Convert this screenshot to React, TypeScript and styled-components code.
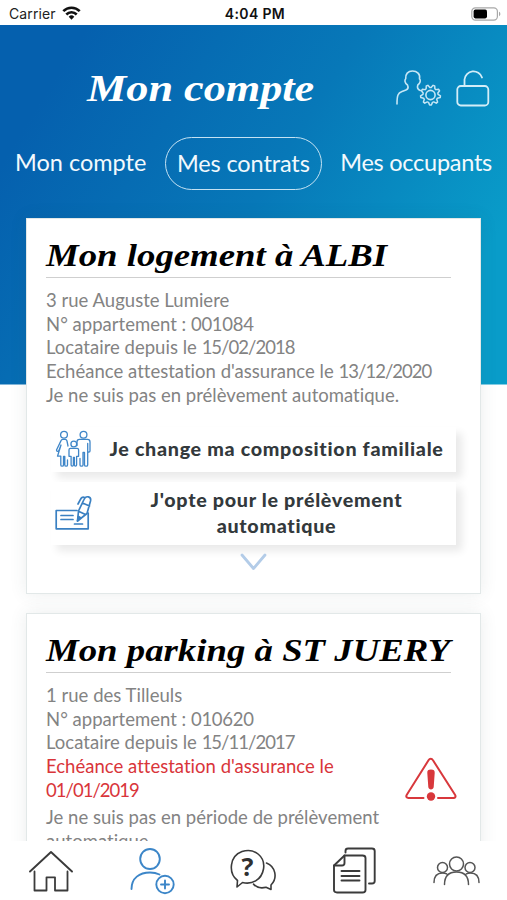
import React from "react";
import styled, { createGlobalStyle } from "styled-components";

const GlobalStyle = createGlobalStyle`
  * { box-sizing: border-box; }
  body { margin: 0; background: #fff; }
  svg { display: block; fill: none; stroke-linecap: round; stroke-linejoin: round; flex: none; }
`;

const Screen = styled.div`
  width: 507px;
  height: 900px;
  display: flex;
  flex-direction: column;
  overflow: hidden;
  background: #fff;
  font-family: Lato, sans-serif;
  font-variant-ligatures: none;
`;

const StatusBar = styled.div`
  height: 25px;
  flex: none;
  display: grid;
  grid-template-columns: 1fr auto 1fr;
  align-items: center;
  padding: 2px 6px 0 9px;
  font-family: Inter, sans-serif;
  font-size: 14px;
  color: #222;
`;
const Carrier = styled.div`
  display: flex;
  align-items: center;
  gap: 6px;
  letter-spacing: 0.1px;
`;
const Clock = styled.div`
  font-weight: 600;
  letter-spacing: 0.35px;
  color: #111;
`;
const Battery = styled.div`
  justify-self: end;
`;

const Main = styled.main`
  flex: 1;
  min-height: 0;
  overflow: hidden;
  background: linear-gradient(122deg, #0560ae 12%, #0778b8 50%, #099cc9 86%) no-repeat;
  background-size: 100% 359.5px;
`;

const Header = styled.header`
  height: 103px;
  display: flex;
  align-items: center;
  padding: 24px 18px 0 87px;
`;
const Title = styled.h1`
  margin: 0;
  width: 309px;
  flex: none;
  font: italic 700 37px/44px "Liberation Serif", serif;
  color: #fff;
  white-space: nowrap;
  transform: scaleX(1.195);
  transform-origin: left;
`;
const HeaderIcons = styled.div`
  display: flex;
  align-items: center;
  gap: 14px;
`;

const Tabs = styled.nav`
  display: flex;
  align-items: center;
  height: 70px;
  padding: 0 15px;
  justify-content: space-between;
`;
const Tab = styled.a<{ $active?: boolean }>`
  display: flex;
  align-items: center;
  justify-content: center;
  height: 53px;
  width: ${(p) => (p.$active ? "157px" : "auto")};
  border: ${(p) => (p.$active ? "1.5px solid #c4e2f3" : "0")};
  border-radius: 27px;
  padding-bottom: ${(p) => (p.$active ? "0" : "2px")};
  font-size: 23.5px;
  letter-spacing: -0.12px;
  color: #f2f9fd;
  white-space: nowrap;

  &:first-child {
    letter-spacing: 0;
  }
  &:last-child {
    letter-spacing: -0.26px;
  }
`;

const Cards = styled.div`
  display: flex;
  flex-direction: column;
  gap: 19px;
  padding: 20px 26px 0;
`;
const Card = styled.section<{ $height: number }>`
  height: ${(p) => p.$height}px;
  flex: none;
  display: flex;
  flex-direction: column;
  padding: 16px 24px 0 19px;
  background: #fff;
  border: 1px solid #e2e8e8;
  box-shadow: 0 0 16px rgba(60, 80, 80, 0.1);
`;
const CardTitle = styled.h2`
  margin: 0 5px 0 0;
  height: 43px;
  flex: none;
  border-bottom: 1.5px solid #cfcfcf;
`;
const CardTitleText = styled.span`
  display: inline-block;
  font: italic 700 32.5px/41px "Liberation Serif", serif;
  color: #000;
  white-space: nowrap;
  transform: scaleX(1.132);
  transform-origin: left;
`;

const Details = styled.div`
  padding-top: 11px;
`;
const Line = styled.div<{ $alert?: boolean }>`
  font-size: 18.5px;
  line-height: 23.7px;
  letter-spacing: 0.02px;
  white-space: nowrap;
  color: ${(p) => (p.$alert ? "#d9353a" : "#838383")};
`;
const Digits = styled.span<{ $code?: boolean }>`
  letter-spacing: ${(p) => (p.$code ? "-0.3px" : "-0.98px")};
`;
const AlertRow = styled.div`
  display: flex;
  justify-content: space-between;
  align-items: center;
  margin: 0 -1px 3.5px 0;
`;

const Actions = styled.div`
  display: flex;
  flex-direction: column;
  gap: 10px;
  padding-top: 19px;
`;
const Action = styled.button<{ $height: number }>`
  display: flex;
  align-items: center;
  height: ${(p) => p.$height}px;
  margin-left: 5px;
  padding: 0 0 0 4px;
  border: 0;
  background: #fff;
  box-shadow: 6px 6px 8px rgba(0, 0, 0, 0.085);
`;
const ActionLabel = styled.span`
  flex: 1;
  text-align: center;
  padding-left: 5px;
  font: 900 19.7px/26px Lato, sans-serif;
  letter-spacing: 0.7px;
  color: #33393c;
  margin-top: -1px;
`;
const More = styled.div`
  display: flex;
  justify-content: center;
  padding: 8px 0 0 5px;
`;

const BottomNav = styled.nav`
  height: 59px;
  flex: none;
  display: grid;
  grid-template-columns: repeat(5, 1fr);
  justify-items: center;
  align-items: center;
  background: #fff;
`;

const WifiIcon = () => (
  <svg width="19" height="15" viewBox="0 0 19 15" stroke="#111" strokeWidth="2.6">
    <path d="M1.3 5.2a11.500 11.500 0 0 1 16.400 0M4.300 8.500a7.300 7.300 0 0 1 10.400 0" strokeLinecap="butt" />
    <path d="M6.700 10.700a4 4 0 0 1 5.600 0L9.500 13.800z" fill="#111" stroke="none" />
  </svg>
);

const BatteryIcon = () => (
  <svg width="30" height="14" viewBox="0 0 30 14">
    <rect x="0.8" y="0.8" width="25.6" height="12.4" rx="3.6" stroke="#a8a8a8" strokeWidth="1.2" />
    <rect x="2.6" y="2.6" width="13.4" height="8.8" rx="1.8" fill="#000" />
    <path d="M28 4.8c1.8.6 1.8 3.8 0 4.4z" fill="#a8a8a8" />
  </svg>
);

const gearPath = Array.from({ length: 36 }, (_, i) => {
  const a = (i * Math.PI) / 18 + Math.PI / 36;
  const r = i % 4 < 2 ? 10 : 7.6;
  return `${i ? "L" : "M"}${(34.5 + r * Math.cos(a)).toFixed(2)} ${(25 + r * Math.sin(a)).toFixed(2)}`;
}).join("") + "Z";

const AccountSettingsIcon = () => (
  <svg width="46" height="37" viewBox="0 0 46 37" stroke="#c5e6f5" strokeWidth="1.6">
    <path d="M1 34c0-9 1-11 5-12.500l4-1.500c2.500-1 2.500-2.500 1.500-5-3-2-3-5-1.800-6.200C9.200 4 12 1 16.500 1s8 3 7 7.800c1.500 1.200.8 4.600-1.700 6.200-1 3 0 4.500 2.500 5.500" />
    <path d={gearPath} strokeWidth="1.5" />
    <circle cx="34.500" cy="25" r="4.600" />
  </svg>
);

const UnlockIcon = () => (
  <svg width="34" height="38" viewBox="0 0 34 38" stroke="#d3edf8" strokeWidth="1.8">
    <rect x="1.300" y="16" width="31" height="19.500" rx="3.500" />
    <path d="M8.500 16v-6.500a9 9 0 0 1 17.500-2" />
  </svg>
);

const FamilyIcon = () => (
  <svg width="37" height="38" viewBox="0 0 37 38" stroke="#3f86c8" strokeWidth="1.3">
    <circle cx="9" cy="4.700" r="3.400" />
    <circle cx="28.500" cy="4.700" r="3.400" />
    <circle cx="18.800" cy="14" r="2.900" />
    <path d="M13 16l-1-5c-.3-1.200-1-1.600-2-1.600H8c-1.200 0-1.800.5-2.200 1.700L1.500 20c0 1.800 2 1.800 2.500.3L6 15l-3.500 11.200h3.300V35c0 1.600 2.700 1.600 2.700 0v-8.500h1.300V35c0 1.600 2.700 1.600 2.700 0v-5" />
    <path d="M15.500 18.300h6.600c1 0 1.500.5 1.500 1.500v6.500h-2V35c0 1.400-2.200 1.400-2.200 0v-7.500h-1V35c0 1.400-2.300 1.400-2.300 0v-8.700H14v-6.500c0-1 .5-1.500 1.500-1.500z" />
    <path d="M22 15.500v-3.600c0-1.700 1-2.500 2.500-2.500h8c1.700 0 2.500.8 2.500 2.500V21c0 1.500-2.300 1.500-2.300 0v-7.500V35c0 1.600-3.200 1.600-3.200 0V22.500h-1.500V35c0 1.600-3 1.600-3 0v-6.500" />
  </svg>
);

const ChequeIcon = () => (
  <svg width="37" height="36" viewBox="0 0 37 36" stroke="#3a80c2" strokeWidth="1.700">
    <path d="M22 15.500H1.200v18.300h32V18" />
    <path d="M6 20.500h12M6 24.500h12M19.500 29h8" />
    <path d="M22.500 26l1-10L29 4.500c2-4.500 7.500-3 6.500 1.500L32 18.500zM27.500 8l7 3M24 16.500l6.500 3M29.500 2.500c-2-1-3.300.3-4.300 2.300L23 9" />
    <path d="M22.500 26l1-4.500 2 1.300z" fill="#3a80c2" />
  </svg>
);

const ChevronIcon = () => (
  <svg width="27" height="18" viewBox="0 0 27 18" stroke="#b3cce8" strokeWidth="2.800">
    <path d="M2 2l11.500 13.500L25 2" />
  </svg>
);

const WarningIcon = () => (
  <svg width="52" height="46" viewBox="0 0 52 46" stroke="#d8383c" strokeWidth="2">
    <path d="M18.500 42H3.500c-2 0-2.800-1.500-1.700-3.200L23.500 4.300c1.200-2 3.300-2 4.500 0l22 34.500c1.100 1.700.4 3.200-1.600 3.200H33" />
    <path d="M26 13.500c2.800 0 3.900 1 3.700 3.500l-1 14c-.2 3.200-5.200 3.200-5.400 0l-1-14c-.2-2.500.9-3.500 3.700-3.500z" fill="#d8383c" stroke="none" />
    <circle cx="26" cy="40.500" r="4.200" fill="#d8383c" stroke="none" />
  </svg>
);

const HomeIcon = () => (
  <svg width="46" height="44" viewBox="0 0 46 44" stroke="#3b3b3b" strokeWidth="1.800" strokeLinejoin="miter">
    <path d="M2 22.500L23 3l21 19.500" strokeWidth="1.900" />
    <path d="M6.500 22.500v19h12V28.300h8.500v13.200h12.500v-19" />
  </svg>
);

const AddUserIcon = () => (
  <svg width="46" height="48" viewBox="0 0 46 48" stroke="#3c86c8" strokeWidth="1.900">
    <ellipse cx="21" cy="12" rx="9.800" ry="10" />
    <path d="M2.500 42c0-11 8-16.500 18.500-16.500 4 0 7 .8 9.500 2" />
    <circle cx="36" cy="37.500" r="8.700" />
    <path d="M36 33.500v8M32 37.500h8" />
  </svg>
);

const HelpStack = styled.div`
  display: grid;
  align-items: start;
  margin-left: 2px;

  & > * {
    grid-area: 1 / 1;
  }
`;
const Question = styled.span`
  font: 700 25px/26px "Open Sans", sans-serif;
  color: #303030;
  padding: 4px 0 0 11px;
`;
const HelpIcon = () => (
  <HelpStack>
    <svg width="48" height="44" viewBox="0 0 48 44" stroke="#3b3b3b" strokeWidth="1.600">
      <path d="M7.500 31.500C-2 24-.5 7 12 2.500 25-1.500 35.500 8 33.500 20c-2 11.500-12 15.700-21 13.500L7 38z" />
      <path d="M36.500 14c9 3.500 11.500 15 4.500 22v4.500l-5-2.200c-5 1.200-9.500.2-12.500-3.200" />
    </svg>
    <Question>?</Question>
  </HelpStack>
);

const DocumentsIcon = () => (
  <svg width="43" height="47" viewBox="0 0 43 47" stroke="#3b3b3b" strokeWidth="1.900">
    <path d="M11.500 8.500H29.500c2 0 3 .8 3 2.500v32c0 1.700-1 2.500-3 2.500H4c-2 0-3-.8-3-2.500V18.500z" />
    <path d="M11.500 8.500v7.500c0 1.700-.8 2.500-2.500 2.500H1M8.500 24h18M8.500 29h18M8.500 33.500h18" />
    <path d="M12.500 5.500V4c0-1.700 1-2.500 2.500-2.500h24c1.800 0 2.700.8 2.700 2.500v30c0 1.700-.9 2.500-2.700 2.500h-3" />
  </svg>
);

const PeopleIcon = () => (
  <svg width="47" height="30" viewBox="0 0 47 30" stroke="#555" strokeWidth="1.500">
    <circle cx="23.500" cy="8" r="7" />
    <circle cx="9.500" cy="11.500" r="5" />
    <circle cx="37" cy="11.500" r="5" />
    <path d="M11.500 28.500c0-8.500 4-12.500 12-12.500s12 4 12 12.500M1 26.500c0-6.500 3-9.500 8.500-9.500 1.700 0 3 .3 4.200.9M46 26.500c0-6.500-3-9.500-8.500-9.500-1.700 0-3 .3-4.200.9" />
  </svg>
);

export default function App() {
  return (
    <>
      <GlobalStyle />
      <Screen>
        <StatusBar>
          <Carrier>Carrier <WifiIcon /></Carrier>
          <Clock>4:04 PM</Clock>
          <Battery><BatteryIcon /></Battery>
        </StatusBar>
        <Main>
          <Header>
            <Title>Mon compte</Title>
            <HeaderIcons>
              <AccountSettingsIcon />
              <UnlockIcon />
            </HeaderIcons>
          </Header>
          <Tabs>
            <Tab>Mon compte</Tab>
            <Tab $active>Mes contrats</Tab>
            <Tab>Mes occupants</Tab>
          </Tabs>
          <Cards>
            <Card $height={376}>
              <CardTitle><CardTitleText>Mon logement à ALBI</CardTitleText></CardTitle>
              <Details>
                <Line>3 rue Auguste Lumiere</Line>
                <Line>N° appartement : <Digits $code>001084</Digits></Line>
                <Line>Locataire depuis le <Digits>15/02/2018</Digits></Line>
                <Line>Echéance attestation d'assurance le <Digits>13/12/2020</Digits></Line>
                <Line>Je ne suis pas en prélèvement automatique.</Line>
              </Details>
              <Actions>
                <Action $height={45}>
                  <FamilyIcon />
                  <ActionLabel>Je change ma composition familiale</ActionLabel>
                </Action>
                <Action $height={63}>
                  <ChequeIcon />
                  <ActionLabel>J'opte pour le prélèvement<br />automatique</ActionLabel>
                </Action>
              </Actions>
              <More><ChevronIcon /></More>
            </Card>
            <Card $height={376}>
              <CardTitle><CardTitleText>Mon parking à ST JUERY</CardTitleText></CardTitle>
              <Details>
                <Line>1 rue des Tilleuls</Line>
                <Line>N° appartement : <Digits $code>010620</Digits></Line>
                <Line>Locataire depuis le <Digits>15/11/2017</Digits></Line>
                <AlertRow>
                  <div>
                    <Line $alert>Echéance attestation d'assurance le</Line>
                    <Line $alert><Digits>01/01/2019</Digits></Line>
                  </div>
                  <WarningIcon />
                </AlertRow>
                <Line>Je ne suis pas en période de prélèvement</Line>
                <Line>automatique.</Line>
              </Details>
            </Card>
          </Cards>
        </Main>
        <BottomNav>
          <HomeIcon />
          <AddUserIcon />
          <HelpIcon />
          <DocumentsIcon />
          <PeopleIcon />
        </BottomNav>
      </Screen>
    </>
  );
}
